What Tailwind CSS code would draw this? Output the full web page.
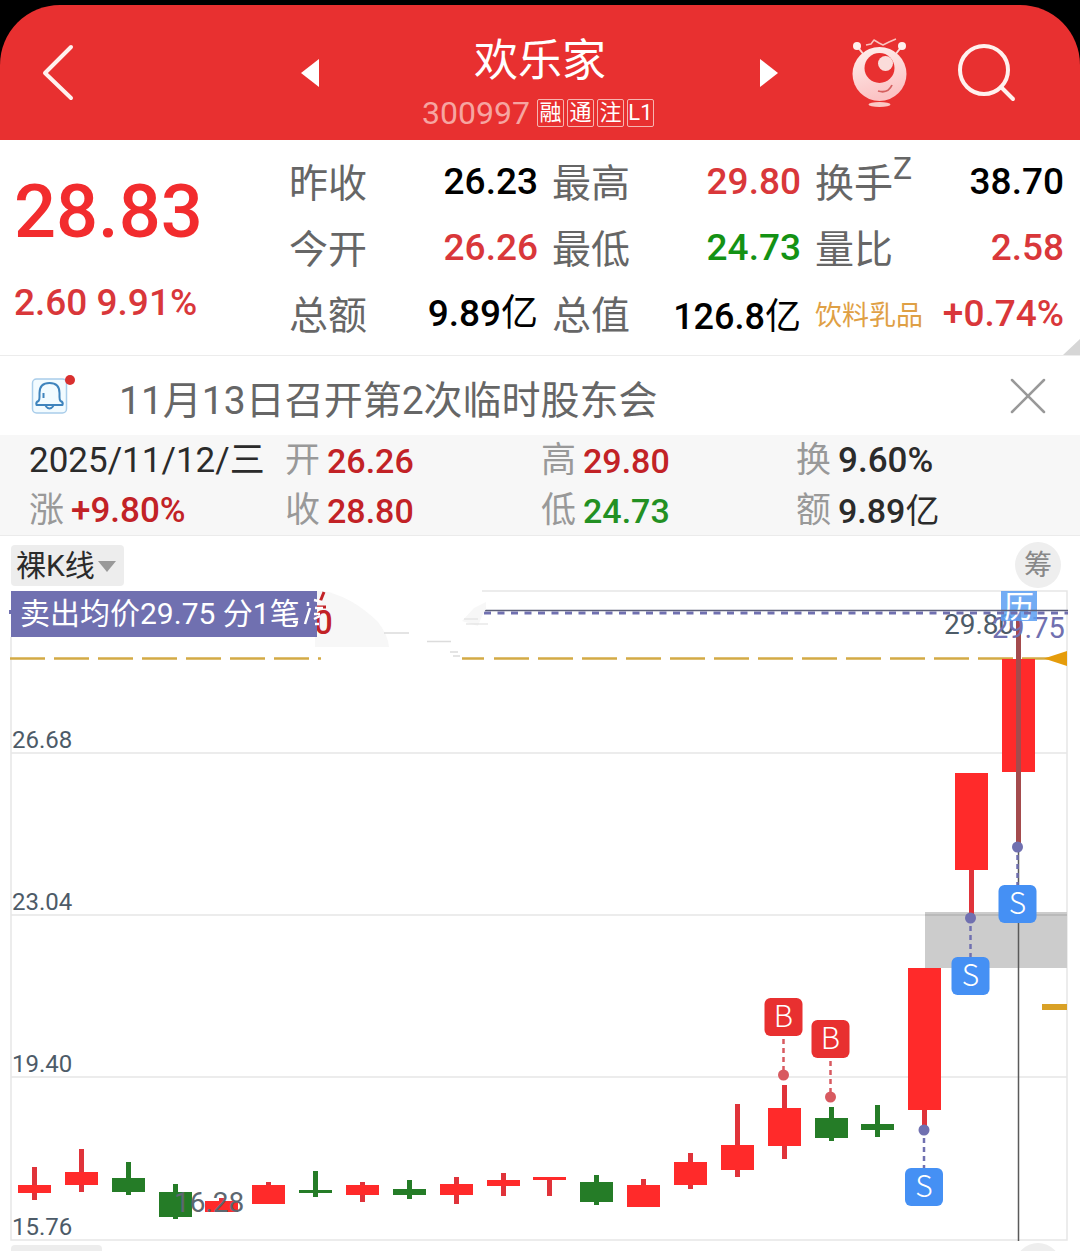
<!DOCTYPE html>
<html lang="zh-CN">
<head>
  <meta charset="UTF-8">
  <title>欢乐家 300997</title>
  <meta name="viewport" content="width=device-width, initial-scale=1.0">
  <script src="https://cdn.jsdelivr.net/npm/@tailwindcss/browser@4"></script>
</head>
<body class="bg-white font-[Roboto,'Noto_Sans_CJK_SC',sans-serif] text-black overflow-x-hidden">

  <!-- 页面头部 -->
  <div class="bg-black pt-[5px]">
    <header class="grid grid-cols-[1fr_478px_1fr] items-center h-[135px] bg-[#e83030] rounded-t-[60px] text-white">
      <a href="#" aria-label="返回" class="pl-10">
        <svg width="36" height="60" viewBox="0 0 36 60" fill="none" stroke="#fff1ee" stroke-width="4" stroke-linecap="round" stroke-linejoin="round"><path d="M31 4 5 30 31 55"/></svg>
      </a>
      <div class="flex items-center justify-between">
        <button type="button" aria-label="上一只">
          <svg width="19" height="28" viewBox="0 0 19 28" fill="#fff"><path d="M0 14 18 0v28z"/></svg>
        </button>
        <div class="flex flex-col items-center gap-[10px] pt-4">
          <h1 class="text-[44px] leading-[54px] font-normal">欢乐家</h1>
          <div class="flex items-center gap-[3px] h-[30px] pr-1 leading-[30px]">
            <span class="text-[32px] text-[#f6a5a1] mr-1">300997</span>
            <span class="w-[27px] h-7 border border-[#f6b5b0] rounded-xs text-center text-[22px] leading-[26px]">融</span>
            <span class="w-[27px] h-7 border border-[#f6b5b0] rounded-xs text-center text-[22px] leading-[26px]">通</span>
            <span class="w-[27px] h-7 border border-[#f6b5b0] rounded-xs text-center text-[22px] leading-[26px]">注</span>
            <span class="w-[27px] h-7 border border-[#f6b5b0] rounded-xs text-center text-[22px] leading-[26px]">L1</span>
          </div>
        </div>
        <button type="button" aria-label="下一只">
          <svg width="19" height="28" viewBox="0 0 19 28" fill="#fff"><path d="M18 14 0 0v28z"/></svg>
        </button>
      </div>
      <div class="flex items-center justify-end gap-[46px] pr-16">
        <button type="button" aria-label="智能助手">
          <svg width="60" height="70" viewBox="0 0 60 70">
            <defs>
              <linearGradient id="ball" x1="0" y1="0" x2="0.300" y2="1">
                <stop offset="0" stop-color="#fff1ee"/><stop offset="1" stop-color="#fbc3c4"/>
              </linearGradient>
            </defs>
            <path d="M7 8 14 17M52 8 45 17" stroke="#fbd9d5" stroke-width="2"/>
            <circle cx="7" cy="8" r="4" fill="#fff0ee"/>
            <circle cx="52" cy="8" r="4" fill="#fff0ee"/>
            <path d="M16 7 21 6 24 2 29 5 33 7 39 4 46 1" fill="none" stroke="#f9c4bf" stroke-width="1.500" stroke-linejoin="round"/>
            <circle cx="29.500" cy="36" r="27" fill="url(#ball)"/>
            <circle cx="29.500" cy="30" r="15" fill="#e83030"/>
            <circle cx="35.500" cy="25.500" r="7.500" fill="#fbdcda"/>
            <path d="M28 53q10 3 14-6" fill="none" stroke="#d4605f" stroke-width="1.800"/>
            <ellipse cx="29.500" cy="66.500" rx="11" ry="2.500" fill="#fbc9c6"/>
          </svg>
        </button>
        <button type="button" aria-label="搜索">
          <svg width="60" height="60" viewBox="0 0 60 60" fill="none" stroke="#fff1ee" stroke-width="4" stroke-linecap="round"><circle cx="28" cy="27" r="24"/><path d="M45 44 57 56"/></svg>
        </button>
      </div>
    </header>
  </div>

  <!-- 行情 -->
  <section class="relative grid grid-cols-[261fr_249fr_249fr_249fr] auto-rows-[66px] items-center gap-x-[14px] pl-[14px] pr-4 pt-[9px] pb-2 border-b border-[#ececec] text-[39px]">
    <div class="row-span-3 self-start pt-[23px] font-medium">
      <div class="text-[74px] leading-[80px] text-[#f22c2e]">28.83</div>
      <div class="mt-[31px] text-[37px] leading-10 text-[#d9373a]">2.60 9.91%</div>
    </div>
    <div class="flex justify-between items-center"><span class="pt-[5px] text-[#666]">昨收</span><span class="text-[37px] font-medium">26.23</span></div>
    <div class="flex justify-between items-center"><span class="pt-[5px] text-[#666]">最高</span><span class="text-[37px] font-medium text-[#d9373a]">29.80</span></div>
    <div class="flex justify-between items-center h-full"><span class="pt-[5px] text-[#666]">换手</span><span class="self-start mr-auto text-[32px] leading-[38px] text-[#666]">Z</span><span class="text-[37px] font-medium">38.70</span></div>
    <div class="flex justify-between items-center"><span class="pt-[5px] text-[#666]">今开</span><span class="text-[37px] font-medium text-[#d9373a]">26.26</span></div>
    <div class="flex justify-between items-center"><span class="pt-[5px] text-[#666]">最低</span><span class="text-[37px] font-medium text-[#149214]">24.73</span></div>
    <div class="flex justify-between items-center"><span class="pt-[5px] text-[#666]">量比</span><span class="text-[37px] font-medium text-[#d9373a]">2.58</span></div>
    <div class="flex justify-between items-center"><span class="pt-[5px] text-[#666]">总额</span><span class="text-[37px] font-medium">9.89<span class="font-normal">亿</span></span></div>
    <div class="flex justify-between items-center"><span class="pt-[5px] text-[#666]">总值</span><span class="pt-[5px] text-[36px] font-medium">126.8<span class="font-normal">亿</span></span></div>
    <div class="flex justify-between items-center whitespace-nowrap"><a href="#" class="pt-[5px] text-[27px] text-[#dfa045]">饮料乳品</a><span class="text-[37px] font-medium text-[#d9373a]">+0.74%</span></div>
    <svg class="absolute right-0 bottom-0" width="17" height="16" viewBox="0 0 17 16"><path d="M17 0v16H0z" fill="#d6d6d6"/></svg>
  </section>

  <!-- 公告提醒 -->
  <section class="flex items-center h-[79px] pl-[31px] pr-[34px]">
    <svg width="46" height="42" viewBox="0 0 46 42" fill="none" class="mb-1">
      <rect x="1.500" y="6" width="34" height="34" rx="4" fill="#f2fbff" stroke="#a9cdea" stroke-width="1.500"/>
      <path d="M5.500 32q-1-3 2-4 1-1 1-4v-4q0-10 10-10t10 10v4q0 3 1 4 3 1 2 4z" stroke="#3f84bd" stroke-width="2" stroke-linejoin="round"/>
      <path d="M14.500 33q4 5 8 0M12.500 20v5" stroke="#3f84bd" stroke-width="2"/>
      <circle cx="39" cy="7" r="5" fill="#d9302f"/>
    </svg>
    <a href="#" class="ml-[42px] mr-auto mt-[10px] text-[39px] leading-[60px] text-[#666]">11月13日召开第2次临时股东会</a>
    <button type="button" aria-label="关闭">
      <svg width="36" height="36" viewBox="0 0 36 36" stroke="#999" stroke-width="2.500" stroke-linecap="round"><path d="M2 2 34 34M34 2 2 34"/></svg>
    </button>
  </section>

  <!-- 当日数据 -->
  <section class="grid grid-cols-[256fr_256fr_255fr_284fr] auto-rows-[50px] pl-[29px] bg-[#f7f7f7] border-b border-[#ebebeb] text-[35px] leading-[52px] text-[#999] whitespace-nowrap">
    <div class="text-[#2b2b2b]">2025/11/12/三</div>
    <div class="flex gap-[7px]">开<span class="text-[34px] font-medium text-[#c22226]">26.26</span></div>
    <div class="flex gap-[7px]">高<span class="text-[34px] font-medium text-[#c22226]">29.80</span></div>
    <div class="flex gap-[7px]">换<span class="font-medium text-[#2b2b2b]">9.60%</span></div>
    <div class="flex gap-[7px]">涨<span class="font-medium text-[#c22226]">+9.80%</span></div>
    <div class="flex gap-[7px]">收<span class="text-[34px] font-medium text-[#c22226]">28.80</span></div>
    <div class="flex gap-[7px]">低<span class="text-[34px] font-medium text-[#239023]">24.73</span></div>
    <div class="flex gap-[7px]">额<span class="text-[34px] font-medium text-[#2b2b2b]">9.89<span class="font-normal">亿</span></span></div>
  </section>

  <!-- K线工具栏 -->
  <div class="flex items-center justify-between h-[52px] pl-[11px] pr-[19px] pt-[6px]">
    <div class="relative">
      <select aria-label="K线类型" class="appearance-none w-[113px] h-[41px] pl-[5px] rounded bg-[#ededed] text-[30px] leading-[41px] text-[#2b2b2b]">
        <option>裸K线</option>
      </select>
      <svg class="absolute right-2 top-4 pointer-events-none" width="18" height="11" viewBox="0 0 18 11"><path d="M0 0h18l-9 11z" fill="#999"/></svg>
    </div>
    <button type="button" class="size-[46px] rounded-full bg-[#eee] pt-[2px] text-[28px] leading-[44px] text-[#888]">筹</button>
  </div>

  <!-- K线图 -->
  <svg id="chart" class="block w-full" viewBox="0 588 1080 655" font-size="24">
    <g fill="none" stroke="#e6e6e6" stroke-width="1.500">
      <path d="M482 591H1067V1240H11V637"/>
      <path d="M11 753H1067M11 915H1067M11 1077H1067"/>
    </g>
    <rect x="925" y="912" width="142" height="56" fill="#ccc"/>
    <path d="M925 915H1067" stroke="#b5b5b5" stroke-width="1.500"/>
    <path d="M1042 1007H1067" stroke="#d9a126" stroke-width="6"/>
    <g fill="#4d5b68">
      <text x="12" y="748">26.68</text>
      <text x="12" y="910">23.04</text>
      <text x="12" y="1072">19.40</text>
      <text x="12" y="1235">15.76</text>
    </g>

    <!-- 现价线 -->
    <path d="M10 658.500H321" stroke="#d3aa45" stroke-width="2.500" stroke-dasharray="35 9"/>
    <path d="M462 658.500H484M494 658.500H1050" stroke="#d3aa45" stroke-width="2.500" stroke-dasharray="35 9"/>
    <path d="M1044 658.500 1067 651V666z" fill="#e59c0b"/>

    <!-- 十字光标 -->
    <path d="M1018.500 840V1241" stroke="#5a5a5a" stroke-width="1.500"/>
    <g id="candles"></g>
    <text x="174" y="1212" font-size="28" fill="#5d6770">16.28</text>

    <text x="944" y="634" font-size="28" fill="#4d5b68">29.80</text>
    <text x="992" y="638" font-size="29" fill="#7070b0">29.75</text>
    <rect x="1001" y="591" width="36" height="30" fill="#5b9df2" fill-opacity="0.850"/>
    <text x="1004" y="617" font-size="30" fill="#fff">历</text>
    <path d="M482 610.500H1068" stroke="#5c5f78" stroke-width="1.500"/>
    <path d="M484 613H1068" stroke="#7070b0" stroke-width="3" stroke-dasharray="7 6.500"/>

    <g id="marks" font-size="30" text-anchor="middle" font-family="Noto Sans CJK SC, sans-serif" font-weight="300" fill="#fff"></g>

    <!-- 成交均价标签 -->
    <path d="M322 591Q350 595 378 622Q388 635 389 647H315V591z" fill="#f7f7f7"/>
    <path d="M384 633H409M427 641.500H451M450 652H458M453 656H460" stroke="#dcdcdc" stroke-width="1.500"/>
    <path d="M462 621 474 608 486 602V609L482 616 478 626z" fill="#f7f7f7"/>
    <path d="M464 619H478M466 624H488" stroke="#ddd"/>
    <text x="314" y="634" font-size="33" font-weight="500" fill="#c22226">0</text>
    <path d="M320 602 324 592M317 607H326" stroke="#c22226" stroke-width="3"/>
    <path d="M9 612H12" stroke="#7070b0" stroke-width="4"/>
    <rect x="11" y="591" width="306" height="46" fill="#7070b0"/>
    <text x="20" y="624" font-size="30" fill="#fff">卖出均价29.75 分1笔</text>
    <path d="M293 622H298M305 624 310 608M308 602V606M314 600 322 602M315 608H323M314 614H320M314 619 320 616M315 624H319" stroke="#fff" stroke-width="2.500"/>
  </svg>

  <!-- 副图工具栏 -->
  <div class="flex items-start justify-between h-2 overflow-hidden pl-[11px] pr-[19px]">
    <div class="mt-[2px] w-[91px] h-10 rounded bg-[#ededed]"></div>
    <div class="size-[46px] rounded-full bg-[#eee]"></div>
  </div>

<script>
// 每根K线: [涨跌, 实体上, 实体下, 影线上, 影线下]
const candles = [
  ['up', 1185, 1193, 1167, 1200],
  ['up', 1172, 1185, 1149, 1192],
  ['down', 1178, 1192, 1162, 1195],
  ['down', 1192, 1217, 1184, 1219],
  ['up', 1201, 1212, 1198, 1212],
  ['up', 1185, 1204, 1182, 1204],
  ['down', 1190, 1193, 1171, 1197],
  ['up', 1185, 1195, 1182, 1202],
  ['down', 1189, 1195, 1180, 1199],
  ['up', 1184, 1195, 1177, 1204],
  ['up', 1180, 1186, 1173, 1196],
  ['up', 1177, 1180, 1177, 1196],
  ['down', 1182, 1202, 1175, 1205],
  ['up', 1185, 1207, 1179, 1207],
  ['up', 1162, 1185, 1153, 1189],
  ['up', 1145, 1170, 1104, 1177],
  ['up', 1108, 1146, 1085, 1159],
  ['down', 1118, 1138, 1107, 1141],
  ['down', 1124, 1130, 1105, 1137],
  ['up', 968, 1110, 968, 1130],
  ['up', 773, 870, 773, 918],
  ['up', 659, 772, 612, 847],
];
document.getElementById('candles').innerHTML = candles.map(([dir, top, bottom, high, low], i) => {
  const x = Math.floor(34.5 + i * 46.86);
  const body = dir === 'up' ? '#ff2a2a' : '#257c27';
  const last = i === candles.length - 1;
  const wick = last ? '#a44b4d' : (dir === 'up' ? '#e0333a' : '#257c27');
  const line = `<rect x="${x - 2}" y="${high}" width="5" height="${low - high}" fill="${wick}"/>`;
  const box = `<rect x="${x - 16}" y="${top}" width="33" height="${bottom - top}" fill="${body}"/>`;
  return last ? box + line : line + box;
}).join('');

// 买卖点: [类型, x, 圆点y, 方块上沿y]
const marks = [
  ['B', 783.5, 1075, 998],
  ['B', 830.5, 1097, 1020],
  ['S', 924, 1130, 1168],
  ['S', 970.5, 918, 957],
  ['S', 1017.5, 847, 885],
];
document.getElementById('marks').innerHTML = marks.map(([type, x, dot, top]) => {
  const buy = type === 'B';
  const color = buy ? '#d85a60' : '#7070b0';
  return `
    <path d="M${x} ${buy ? top + 41 : dot + 8}V${buy ? dot : top}" stroke="${color}" stroke-width="2.5" stroke-dasharray="5 4"/>
    <circle cx="${x}" cy="${dot}" r="5.5" fill="${color}"/>
    <rect x="${x - 19}" y="${top}" width="38" height="38" rx="6" fill="${buy ? '#e83030' : '#4590f4'}"/>
    <text x="${x}" y="${top + 29}">${type}</text>`;
}).join('');
</script>
</body>
</html>
